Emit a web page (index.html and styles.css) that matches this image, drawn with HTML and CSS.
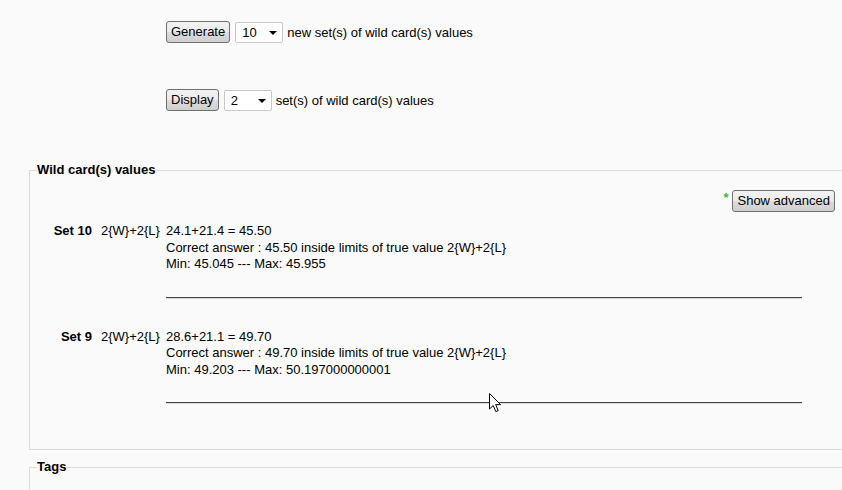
FILE: index.html
```html
<!DOCTYPE html>
<html>
<head>
<meta charset="utf-8">
<link rel="stylesheet" href="styles.css">
</head>
<body>
<div class="page">
  <div class="controls">
    <div class="ctl-row first">
      <button class="btn">Generate</button>
      <span class="sel">10</span>
      <span class="ctl-text">new set(s) of wild card(s) values</span>
    </div>
    <div class="ctl-row second">
      <button class="btn">Display</button>
      <span class="sel">2</span>
      <span class="ctl-text">set(s) of wild card(s) values</span>
    </div>
  </div>

  <fieldset class="box wild">
    <legend>Wild card(s) values</legend>
    <div class="adv-row">
      <span class="star">*</span><button class="btn">Show advanced</button>
    </div>
    <div class="set">
      <div class="set-label">Set 10</div>
      <div class="set-formula">2{W}+2{L}</div>
      <div class="set-body">
        <div>24.1+21.4 = 45.50</div>
        <div>Correct answer : 45.50 inside limits of true value 2{W}+2{L}</div>
        <div>Min: 45.045 --- Max: 45.955</div>
        <div class="rule"></div>
      </div>
    </div>
    <div class="set">
      <div class="set-label">Set 9</div>
      <div class="set-formula">2{W}+2{L}</div>
      <div class="set-body">
        <div>28.6+21.1 = 49.70</div>
        <div>Correct answer : 49.70 inside limits of true value 2{W}+2{L}</div>
        <div>Min: 49.203 --- Max: 50.197000000001</div>
        <div class="rule"></div>
      </div>
    </div>
  </fieldset>

  <fieldset class="box tags">
    <legend>Tags</legend>
    <div class="tags-body"></div>
  </fieldset>

  <svg class="cursor" width="13" height="20" viewBox="0 0 13 20">
    <path d="M0.5 0.5 L0.5 16 L4.2 12.5 L6.8 18.6 L9.2 17.6 L6.7 11.6 L11.6 11.6 Z" fill="#fff" stroke="#000" stroke-width="1" stroke-linejoin="miter"/>
  </svg>
</div>
</body>
</html>
```

FILE: styles.css
```css
html, body {
  margin: 0;
  padding: 0;
  background: #fafafa;
  overflow: hidden;
}
body {
  font-family: "Liberation Sans", Arial, sans-serif;
  font-size: 13px;
  color: #000;
  width: 842px;
  height: 490px;
}
.page {
  position: relative;
  width: 842px;
  height: 490px;
  overflow: hidden;
}
.controls {
  padding-left: 166px;
}
.ctl-row {
  display: flex;
  align-items: center;
  height: 22px;
}
.ctl-row.first { padding-top: 21px; }
.ctl-row.second { margin-top: 46px; }
.btn {
  font-family: "Liberation Sans", Arial, sans-serif;
  font-size: 13px;
  color: #000;
  height: 22px;
  padding: 0 4px;
  border: 1px solid #707070;
  border-radius: 3px;
  background: linear-gradient(#f2f2f2 0%, #ebebeb 50%, #dddddd 50%, #cfcfcf 100%);
  line-height: 20px;
  margin: 0;
}
.sel {
  position: relative;
  box-sizing: border-box;
  width: 48px;
  height: 21px;
  margin-left: 5px;
  border: 1px solid #c8c8c8;
  border-radius: 2px;
  background: #fff;
  padding-left: 6px;
  line-height: 19px;
}
.sel::after {
  content: "";
  position: absolute;
  right: 5px;
  top: 8px;
  border-left: 4px solid transparent;
  border-right: 4px solid transparent;
  border-top: 4px solid #000;
}
.ctl-text {
  margin-left: 4px;
}

.box {
  margin: 0 -20px 0 29px;
  padding: 0 27px 0 0;
  border: 1px solid #dcdcdc;
  border-right: none;
}
.box legend {
  font-weight: bold;
  font-size: 13px;
  padding: 0;
  margin-left: 7px;
  line-height: 16px;
}
.wild {
  margin-top: 51px;
  padding-bottom: 45px;
}
.adv-row {
  display: flex;
  justify-content: flex-end;
  align-items: center;
  margin-top: 12px;
  gap: 4px;
}
.star {
  color: #33bb33;
  font-size: 13px;
  font-weight: bold;
  align-self: flex-start;
  margin-top: 0;
}
.set {
  display: grid;
  grid-template-columns: 62px 58px 1fr;
  column-gap: 8px;
  line-height: 16.5px;
  margin-top: 11px;
}
.set + .set {
  margin-top: 30px;
}
.set-label {
  font-weight: bold;
  text-align: right;
}
.set-formula {
  padding-left: 1px;
}
.rule {
  width: 636px;
  height: 1px;
  background: #444;
  border-bottom: 1px solid #d8d8d8;
  margin-top: 24px;
}
.tags {
  margin-top: 9px;
  height: 40px;
}
.tags-body {
  height: 30px;
}
.cursor {
  position: absolute;
  left: 489px;
  top: 393px;
}
```
